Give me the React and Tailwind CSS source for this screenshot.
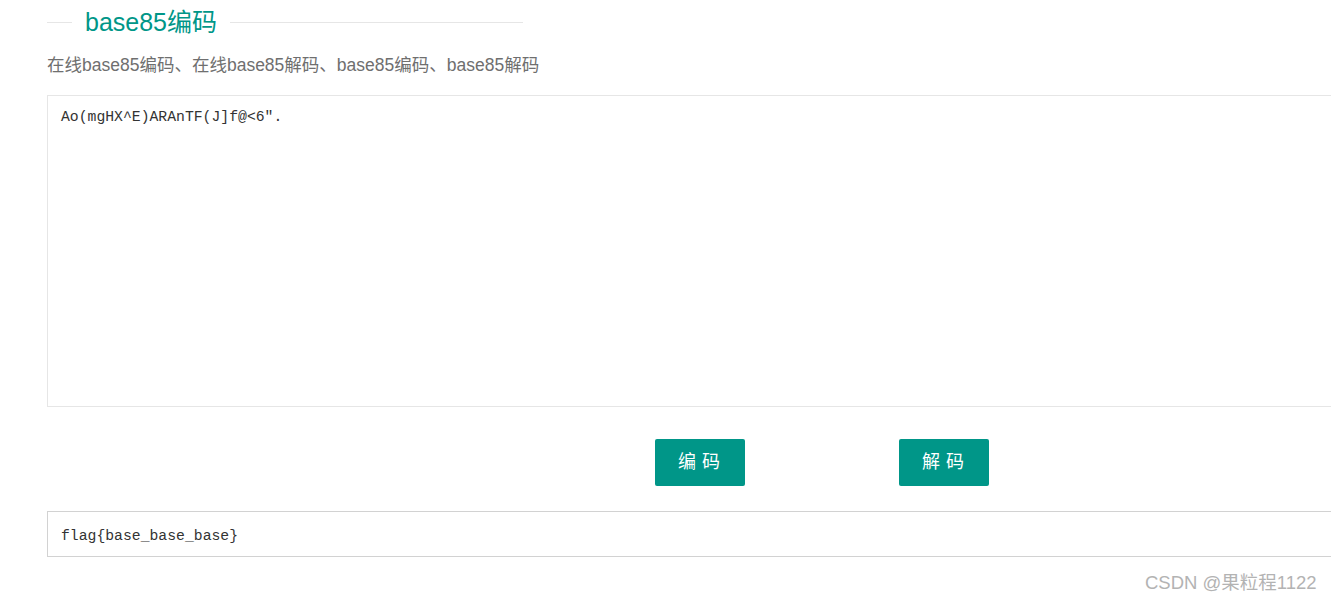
export default function App() {
  return (
    <div className="relative w-[1331px] h-[602px] overflow-hidden bg-white" style={{ fontFamily: '"Liberation Sans", "Noto Sans CJK SC", sans-serif' }}>
      <div className="pl-[47px] w-[1400px]">
        <div className="flex items-center h-[44px]">
          <div className="w-[25px] h-px bg-[#e6e6e6]" />
          <h2 className="px-[13px] text-[25px] leading-none text-[#009688]">base85编码</h2>
          <div className="w-[293px] h-px bg-[#e6e6e6]" />
        </div>
        <p className="mt-[10px] text-[17.5px] leading-[22px] text-[#6f6f6f]">
          在线base85编码、在线base85解码、base85编码、base85解码
        </p>

        <div className="mt-[19px] h-[312px] border border-[#e6e6e6] px-[13px] pt-[11px] text-[14.75px] leading-[20px] text-[#333]" style={{ fontFamily: '"Liberation Mono", monospace' }}>
          Ao(mgHX^E)ARAnTF(J]f@&lt;6".
        </div>

        <div className="flex mt-[32px] pl-[608px] gap-[154px]">
          <button className="w-[90px] h-[47px] rounded-[2px] bg-[#009688] text-white text-[18px] tracking-[6px] pl-[4px]">编码</button>
          <button className="w-[90px] h-[47px] rounded-[2px] bg-[#009688] text-white text-[18px] tracking-[6px] pl-[4px]">解码</button>
        </div>

        <div className="mt-[25px] h-[46px] border border-[#d2d2d2] px-[13px] pt-[4px] flex items-center text-[14.75px] text-[#333]" style={{ fontFamily: '"Liberation Mono", monospace' }}>
          flag{'{'}base_base_base{'}'}
        </div>
      </div>

      <div className="absolute left-[1145px] top-[571px] text-[18.5px] leading-[24px] text-[#b3b3b3]">CSDN @果粒程1122</div>
    </div>
  );
}
